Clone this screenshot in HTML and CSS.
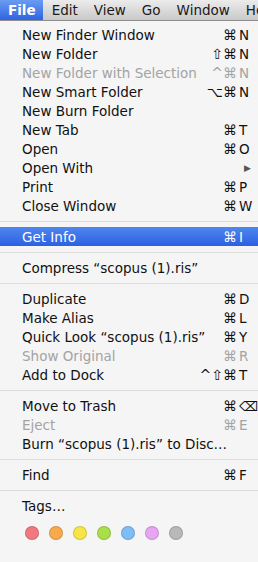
FILE: index.html
```html
<!DOCTYPE html>
<html lang="en">

<head>
    <meta charset="UTF-8">
    <meta name="viewport" content="width=device-width, initial-scale=1.0">
    <title>Finder - File menu</title>
    <link rel="stylesheet" href="styles.css">
</head>

<body>
    <!-- Top menu bar -->
    <div class="menubar">
        <span class="menu-title active">File</span>
        <span class="menu-title">Edit</span>
        <span class="menu-title">View</span>
        <span class="menu-title">Go</span>
        <span class="menu-title">Window</span>
        <span class="menu-title">Help</span>
    </div>

    <!-- File menu dropdown -->
    <div class="menu">
        <div class="item"><span class="label">New Finder Window</span><span class="shortcut"><span class="mods">⌘</span><span class="key">N</span></span></div>
        <div class="item"><span class="label">New Folder</span><span class="shortcut"><span class="mods">⇧⌘</span><span class="key">N</span></span></div>
        <div class="item disabled"><span class="label">New Folder with Selection</span><span class="shortcut"><span class="mods">^⌘</span><span class="key">N</span></span></div>
        <div class="item"><span class="label">New Smart Folder</span><span class="shortcut"><span class="mods">⌥⌘</span><span class="key">N</span></span></div>
        <div class="item"><span class="label">New Burn Folder</span></div>
        <div class="item"><span class="label">New Tab</span><span class="shortcut"><span class="mods">⌘</span><span class="key">T</span></span></div>
        <div class="item"><span class="label">Open</span><span class="shortcut"><span class="mods">⌘</span><span class="key">O</span></span></div>
        <div class="item"><span class="label">Open With</span><span class="shortcut"><span class="key arrow">▶</span></span></div>
        <div class="item"><span class="label">Print</span><span class="shortcut"><span class="mods">⌘</span><span class="key">P</span></span></div>
        <div class="item"><span class="label">Close Window</span><span class="shortcut"><span class="mods">⌘</span><span class="key">W</span></span></div>

        <div class="separator"></div>

        <div class="item selected"><span class="label">Get Info</span><span class="shortcut"><span class="mods">⌘</span><span class="key">I</span></span></div>

        <div class="separator"></div>

        <div class="item"><span class="label">Compress “scopus (1).ris”</span></div>

        <div class="separator"></div>

        <div class="item"><span class="label">Duplicate</span><span class="shortcut"><span class="mods">⌘</span><span class="key">D</span></span></div>
        <div class="item"><span class="label">Make Alias</span><span class="shortcut"><span class="mods">⌘</span><span class="key">L</span></span></div>
        <div class="item"><span class="label">Quick Look “scopus (1).ris”</span><span class="shortcut"><span class="mods">⌘</span><span class="key">Y</span></span></div>
        <div class="item disabled"><span class="label">Show Original</span><span class="shortcut"><span class="mods">⌘</span><span class="key">R</span></span></div>
        <div class="item"><span class="label">Add to Dock</span><span class="shortcut"><span class="mods">^⇧⌘</span><span class="key">T</span></span></div>

        <div class="separator"></div>

        <div class="item"><span class="label">Move to Trash</span><span class="shortcut"><span class="mods">⌘</span><span class="key">⌫</span></span></div>
        <div class="item disabled"><span class="label">Eject</span><span class="shortcut"><span class="mods">⌘</span><span class="key">E</span></span></div>
        <div class="item"><span class="label">Burn “scopus (1).ris” to Disc…</span></div>

        <div class="separator"></div>

        <div class="item"><span class="label">Find</span><span class="shortcut"><span class="mods">⌘</span><span class="key">F</span></span></div>

        <div class="separator"></div>

        <div class="item"><span class="label">Tags…</span></div>
        <div class="tags">
            <span class="tag red"></span>
            <span class="tag orange"></span>
            <span class="tag yellow"></span>
            <span class="tag green"></span>
            <span class="tag blue"></span>
            <span class="tag purple"></span>
            <span class="tag gray"></span>
        </div>
    </div>
</body>

</html>
```

FILE: styles.css
```css
/* Colours and sizes */
:root {
    --menu-bg: #f5f5f5;
    --text: #111;
    --text-disabled: #a3a3a3;
    --separator: #dcdcdc;
    --row-height: 19px;
    --indent: 22px;
}

* {
    margin: 0;
    padding: 0;
    box-sizing: border-box;
    font-family: 'DejaVu Sans', 'Liberation Sans', sans-serif;
}

body {
    width: 258px;
    height: 562px;
    overflow: hidden;
    background-color: var(--menu-bg);
    color: var(--text);
    font-size: 13.5px;
}

/* Menu bar */
.menubar {
    display: flex;
    height: 21px;
    background: linear-gradient(#ececec, #c9c9c9);
    border-bottom: 1px solid #8e8e8e;
    white-space: nowrap;
    overflow: hidden;
}

.menu-title {
    display: flex;
    align-items: center;
    padding: 0 8px;
    font-size: 13.5px;
    color: #1a1a1a;
}

.menu-title.active {
    padding: 0 7px 0 8px;
    margin-right: 1px;
    background: linear-gradient(#6b9cf2, #2f63e0);
    color: #fff;
    font-weight: bold;
}

/* Dropdown */
.menu {
    padding-top: 4px;
}

.item {
    display: flex;
    align-items: center;
    height: var(--row-height);
    padding-left: var(--indent);
    white-space: nowrap;
}

.item.disabled {
    color: var(--text-disabled);
}

.item.selected {
    background: linear-gradient(#4f86ee, #2b61e2);
    color: #fff;
}

.shortcut {
    display: flex;
    align-items: center;
    margin-left: auto;
}

.mods {
    text-align: right;
    font-size: 14px;
}

.key {
    width: 19px;
    margin-left: 2px;
}

.key.arrow {
    font-size: 9px;
    color: #555;
    padding-left: 5px;
}

.separator {
    height: 12px;
    padding-top: 6px;
}

.separator::after {
    content: '';
    display: block;
    height: 1px;
    background-color: var(--separator);
}

/* Tag colour dots */
.tags {
    display: flex;
    gap: 10px;
    padding: 11px 0 0 25px;
}

.tag {
    width: 14px;
    height: 14px;
    border-radius: 50%;
    border: 1px solid rgba(0, 0, 0, 0.15);
}

.tag.red { background-color: #f27880; }
.tag.orange { background-color: #f9aa4c; }
.tag.yellow { background-color: #f7e547; }
.tag.green { background-color: #a9df48; }
.tag.blue { background-color: #7fbef5; }
.tag.purple { background-color: #e6a6f2; }
.tag.gray { background-color: #b9b9b9; }
```
